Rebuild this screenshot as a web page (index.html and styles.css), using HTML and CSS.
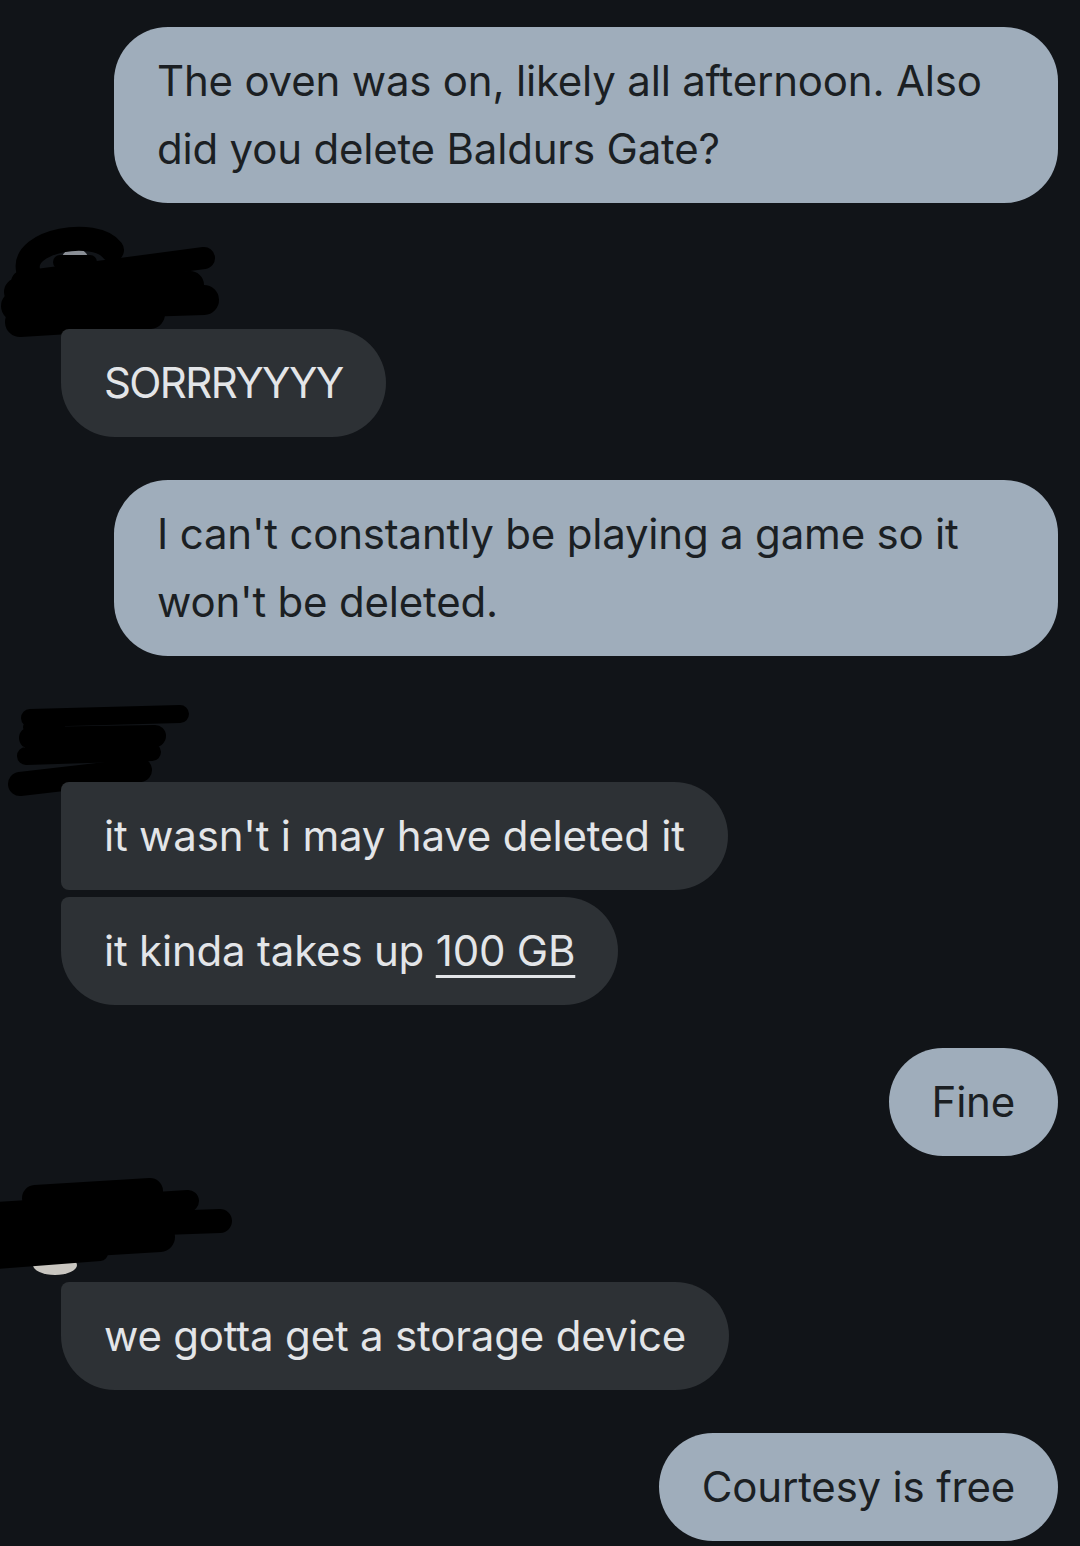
FILE: index.html
```html
<!DOCTYPE html>
<html>
<head>
<meta charset="utf-8">
<link rel="stylesheet" href="styles.css">
</head>
<body>
<div class="thread">
  <div class="row sent"><div class="bubble">The oven was on, likely all afternoon. Also did you delete Baldurs Gate?</div></div>

  <div class="group">
    <svg class="sender" width="230" height="83" viewBox="0 246 230 83">
      <circle cx="75" cy="262" r="14" fill="#8a8f96"/>
      <g stroke="#000" stroke-linecap="round" fill="none">
        <path d="M28 270 C22 240 95 228 112 250" stroke-width="24"/>
        <path d="M22 282 L204 258" stroke-width="22"/>
        <path d="M18 292 L190 285" stroke-width="28"/>
        <path d="M16 306 L204 300" stroke-width="30"/>
        <path d="M20 322 L150 314" stroke-width="30"/>
        <path d="M60 262 L90 262" stroke-width="14"/>
      </g>
    </svg>
    <div class="row recv"><div class="bubble solo caps">SORRRYYYY</div></div>
  </div>

  <div class="row sent"><div class="bubble">I can't constantly be playing a game so it won't be deleted.</div></div>

  <div class="group">
    <svg class="sender" width="230" height="83" viewBox="0 699 230 83">
      <circle cx="42" cy="738" r="20" fill="#5b6168"/>
      <g stroke="#000" stroke-linecap="round" fill="none">
        <path d="M30 718 L180 714" stroke-width="18"/>
        <path d="M30 738 L155 736" stroke-width="22"/>
        <path d="M26 756 L152 752" stroke-width="18"/>
        <path d="M20 784 L140 770" stroke-width="24"/>
        <path d="M28 727 L60 726" stroke-width="10"/>
      </g>
    </svg>
    <div class="row recv"><div class="bubble first">it wasn't i may have deleted it</div></div>
    <div class="row recv tight"><div class="bubble last">it kinda takes up <span class="link">100 GB</span></div></div>
  </div>

  <div class="row sent"><div class="bubble">Fine</div></div>

  <div class="group">
    <svg class="sender" width="230" height="83" viewBox="0 1200 230 83">
      <ellipse cx="55" cy="1266" rx="22" ry="10" fill="#c9c6c0"/>
      <g stroke="#000" stroke-linecap="round" fill="none">
        <path d="M35 1199 L150 1192" stroke-width="26"/>
        <path d="M-5 1214 L188 1202" stroke-width="22"/>
        <path d="M-5 1230 L220 1222" stroke-width="24"/>
        <path d="M-5 1248 L160 1238" stroke-width="30"/>
        <path d="M-5 1262 L100 1254" stroke-width="16"/>
      </g>
    </svg>
    <div class="row recv"><div class="bubble solo">we gotta get a storage device</div></div>
  </div>

  <div class="row sent"><div class="bubble">Courtesy is free</div></div>
</div>
</body>
</html>
```
FILE: styles.css
```css
html, body {
  margin: 0;
  padding: 0;
  background: #111418;
}
body {
  width: 1080px;
  height: 1546px;
  overflow: hidden;
  font-family: "Inter", "Roboto", sans-serif;
}
.thread {
  display: flex;
  flex-direction: column;
  padding-top: 27px;
}
.row {
  display: flex;
}
.thread > .row,
.thread > .group {
  margin-top: 43px;
}
.thread > :first-child {
  margin-top: 0;
}
.group {
  display: flex;
  flex-direction: column;
}
.sender {
  display: block;
  overflow: visible;
}
.row.sent {
  justify-content: flex-end;
  padding: 0 22px 0 114px;
}
.row.recv {
  justify-content: flex-start;
  padding: 0 60px 0 61px;
}
.row.tight {
  margin-top: 7px;
}
.bubble {
  font-size: 42px;
  line-height: 68px;
  padding: 20px 43px;
  border-radius: 54px;
  box-sizing: border-box;
  letter-spacing: -0.2px;
}
.bubble.caps {
  letter-spacing: -1.6px;
}
.sent .bubble {
  background: #9fadbb;
  color: #1b1f23;
}
.recv .bubble {
  background: #2d3135;
  color: #e3e5e8;
}
.recv .bubble.solo {
  border-radius: 8px 54px 54px 54px;
}
.recv .bubble.first {
  border-radius: 8px 54px 54px 8px;
}
.recv .bubble.last {
  border-radius: 8px 54px 54px 54px;
}
.link {
  text-decoration: underline;
  text-decoration-thickness: 3px;
  text-underline-offset: 9px;
}
```
